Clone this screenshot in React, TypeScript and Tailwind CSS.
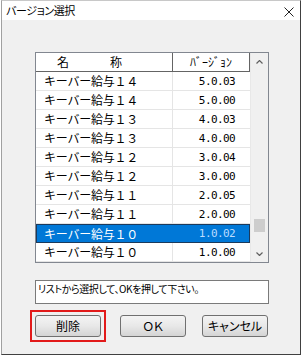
import React from 'react';

const rows = [
  { name: 'キーバー給与１４', ver: '5.0.03' },
  { name: 'キーバー給与１４', ver: '5.0.00' },
  { name: 'キーバー給与１３', ver: '4.0.03' },
  { name: 'キーバー給与１３', ver: '4.0.00' },
  { name: 'キーバー給与１２', ver: '3.0.04' },
  { name: 'キーバー給与１２', ver: '3.0.00' },
  { name: 'キーバー給与１１', ver: '2.0.05' },
  { name: 'キーバー給与１１', ver: '2.0.00' },
  { name: 'キーバー給与１０', ver: '1.0.02' },
  { name: 'キーバー給与１０', ver: '1.0.00' },
];

const SELECTED = 8;

function WinButton({ children }: { children: React.ReactNode }) {
  return (
    <button className="w-[66px] h-[22px] rounded-[3px] border border-[#707070] bg-gradient-to-b from-[#f4f4f4] via-[#e8e8e8] to-[#d4d4d4] text-[12px] text-black flex items-center justify-center [font-feature-settings:'palt']">
      {children}
    </button>
  );
}

export default function App() {
  return (
    <div className="w-[302px] h-[358px] bg-white font-['Noto_Sans_CJK_JP',sans-serif]">
      <div className="ml-px w-[300px] h-[355px] flex flex-col border border-t-[#c8c8c8] border-l-[#a0a0a0] border-r-[#404040] border-b-[#404040]">
        {/* title bar */}
        <div className="h-[19px] bg-white flex items-center justify-between pl-[4px] pr-[6px]">
          <span className="text-[11px] leading-none text-black tracking-[-0.4px] [font-feature-settings:'palt']">バージョン選択</span>
          <svg width="10" height="10" viewBox="0 0 10 10" className="mt-[2px]">
            <path d="M0.5 0.5 L9.5 9.5 M9.5 0.5 L0.5 9.5" stroke="#222" strokeWidth="1" />
          </svg>
        </div>

        {/* body */}
        <div className="flex-1 bg-[#f0f0f0] pl-[33px] pt-[32px] flex flex-col">
          {/* list view */}
          <div className="w-[234px] h-[211px] border border-[#828790] bg-white flex">
            <div className="w-[214px] flex flex-col">
              <div className="h-[19px] flex border-b border-[#646464] bg-white text-[12px] leading-none text-black">
                <div className="w-[137px] border-r border-[#646464] flex items-center">
                  <span className="pl-[21px]">名</span>
                  <span className="pl-[41px]">称</span>
                </div>
                <div className="w-[77px] border-r border-[#646464] flex items-center justify-center">ﾊﾞｰｼﾞｮﾝ</div>
              </div>
              {rows.map((r, i) => {
                const sel = i === SELECTED;
                return (
                  <div
                    key={i}
                    className={`h-[19px] flex text-[12px] leading-none ${
                      sel ? 'bg-[#0078d7] text-white outline outline-1 outline-[#1b3a5c] -outline-offset-1' : 'text-black border-b border-[#e5e5e5]'
                    }`}
                  >
                    <div className={`w-[137px] flex items-center pl-[8px] tracking-[-0.25px] ${sel ? '' : 'border-r border-[#e5e5e5]'}`}>
                      {r.name}
                    </div>
                    <div
                      className={`w-[77px] flex items-center justify-end pr-[15px] font-['DejaVu_Sans_Mono',monospace] text-[11px] tracking-[-0.6px] ${
                        sel ? 'text-[#bcdcff]' : ''
                      }`}
                    >
                      {r.ver}
                    </div>
                  </div>
                );
              })}
            </div>
            {/* scrollbar */}
            <div className="w-[18px] bg-[#f0f0f0] border-l border-[#e8e8e8] flex flex-col items-center">
              <div className="h-[17px] w-full flex items-center justify-center">
                <svg width="7" height="4" viewBox="0 0 7 4">
                  <path d="M0.5 3.5 L3.5 0.5 L6.5 3.5" stroke="#606060" strokeWidth="1.2" fill="none" />
                </svg>
              </div>
              <div className="flex-1 w-full flex flex-col items-center pt-[149px]">
                <div className="w-[11px] h-[13px] bg-[#cdcdcd]" />
              </div>
              <div className="h-[17px] w-full flex items-center justify-center">
                <svg width="7" height="4" viewBox="0 0 7 4">
                  <path d="M0.5 0.5 L3.5 3.5 L6.5 0.5" stroke="#606060" strokeWidth="1.2" fill="none" />
                </svg>
              </div>
            </div>
          </div>

          {/* message */}
          <div className="mt-[17px] w-[234px] h-[24px] border border-[#7a7a7a] bg-white px-[2px] pt-[1px] text-[10px] leading-[14px] text-black [font-feature-settings:'palt'] tracking-[-0.4px]">
            リストから選択して、OKを押して下さい。
          </div>

          {/* buttons */}
          <div className="mt-[11px] flex">
            <div className="relative">
              <WinButton>削除</WinButton>
              <span className="absolute -left-[5px] -top-[5px] -right-[5px] -bottom-[5px] border-2 border-[#e21a1a]" />
            </div>
            <div className="ml-[19px]">
              <WinButton>ＯＫ</WinButton>
            </div>
            <div className="ml-[16px]">
              <WinButton>キャンセル</WinButton>
            </div>
          </div>
        </div>
      </div>
    </div>
  );
}
